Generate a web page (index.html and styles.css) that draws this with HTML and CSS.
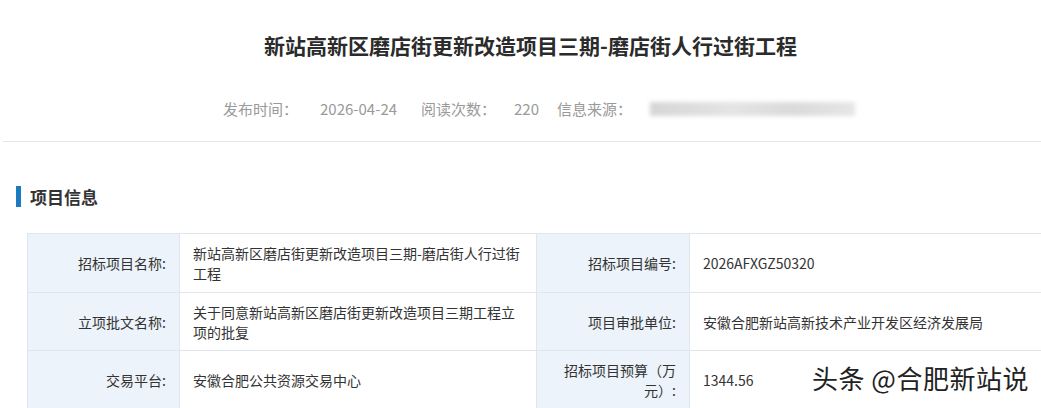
FILE: index.html
```html
<!DOCTYPE html>
<html lang="zh-CN">
<head>
<meta charset="utf-8">
<title>项目信息</title>
<link rel="stylesheet" href="styles.css">
</head>
<body>
<div class="page">
  <header class="article-head">
    <h1 class="title">新站高新区磨店街更新改造项目三期-磨店街人行过街工程</h1>
    <div class="meta">
      <span class="meta-label">发布时间：</span>
      <span class="meta-value date">2026-04-24</span>
      <span class="meta-label read">阅读次数：</span>
      <span class="meta-value count">220</span>
      <span class="meta-label src">信息来源：</span>
      <span class="blur"></span>
    </div>
  </header>
  <div class="divider"></div>
  <h2 class="section-title"><span class="bar"></span>项目信息</h2>
  <table class="info">
    <colgroup>
      <col class="c-l1"><col class="c-v1"><col class="c-l2"><col class="c-v2">
    </colgroup>
    <tr class="r1">
      <th>招标项目名称:</th>
      <td>新站高新区磨店街更新改造项目三期-磨店街人行过街工程</td>
      <th>招标项目编号:</th>
      <td>2026AFXGZ50320</td>
    </tr>
    <tr>
      <th>立项批文名称:</th>
      <td>关于同意新站高新区磨店街更新改造项目三期工程立项的批复</td>
      <th>项目审批单位:</th>
      <td>安徽合肥新站高新技术产业开发区经济发展局</td>
    </tr>
    <tr>
      <th>交易平台:</th>
      <td>安徽合肥公共资源交易中心</td>
      <th class="wrap">招标项目预算（万元）:</th>
      <td>1344.56</td>
    </tr>
  </table>
  <div class="watermark">头条 @合肥新站说</div>
</div>
</body>
</html>
```
FILE: styles.css
```css
* { box-sizing: border-box; }
html, body { margin: 0; padding: 0; background: #fff; }
body {
  width: 1041px;
  height: 408px;
  overflow: hidden;
  font-family: "Noto Sans CJK SC", "Noto Sans", sans-serif;
  color: #333;
}
.page { position: relative; width: 1041px; height: 408px; }
.article-head { padding-top: 30px; }
.title {
  margin: 0;
  text-align: center;
  font-size: 21px;
  line-height: 30px;
  font-weight: 700;
  color: #2b2b2b;
  padding-left: 20px;
}
.meta {
  display: flex;
  align-items: center;
  margin-top: 39px;
  padding-left: 223px;
  height: 20px;
  font-size: 15px;
  line-height: 20px;
  color: #9a9a9a;
}
.meta-value.date { margin-left: 22px; }
.meta-label.read { margin-left: 24px; }
.meta-value.count { margin-left: 18px; }
.meta-label.src { margin-left: 18px; }
.blur {
  display: block;
  margin-left: 18px;
  width: 205px;
  height: 14px;
  background: linear-gradient(90deg, #d6d6d6, #e4e4e4 40%, #dadada 70%, #e6e6e6);
  filter: blur(2px);
}
.divider {
  margin: 22px 0 0 3px;
  height: 1px;
  background: #e6e6e6;
}
.section-title {
  display: flex;
  align-items: center;
  margin: 42px 0 0 16px;
  height: 24px;
  font-size: 17px;
  font-weight: 700;
  color: #333;
}
.bar {
  display: block;
  width: 5px;
  height: 21px;
  background: #1a7bc0;
  margin-right: 9px;
}
.info {
  margin: 25px 0 0 27px;
  width: 1030px;
  border-collapse: collapse;
  table-layout: fixed;
  font-size: 14px;
  line-height: 20px;
}
.c-l1 { width: 152px; }
.c-v1 { width: 357px; }
.c-l2 { width: 153px; }
.c-v2 { width: 368px; }
.info tr { height: 58px; }
.info tr.r1 { height: 59px; }
.info th, .info td {
  border: 1px solid #dfe6ee;
  vertical-align: middle;
  word-break: break-all;
}
.info th {
  background: #edf3fa;
  font-weight: 400;
  text-align: right;
  padding: 0 13px 0 20px;
  color: #333;
}
.info td {
  padding: 0 12px 0 13px;
  color: #333;
}
.watermark {
  position: absolute;
  left: 812px;
  top: 362px;
  font-size: 26px;
  line-height: 32px;
  color: #222;
  letter-spacing: 0.5px;
  text-shadow: 0 0 2px #fff, 0 0 3px #fff;
}
```
